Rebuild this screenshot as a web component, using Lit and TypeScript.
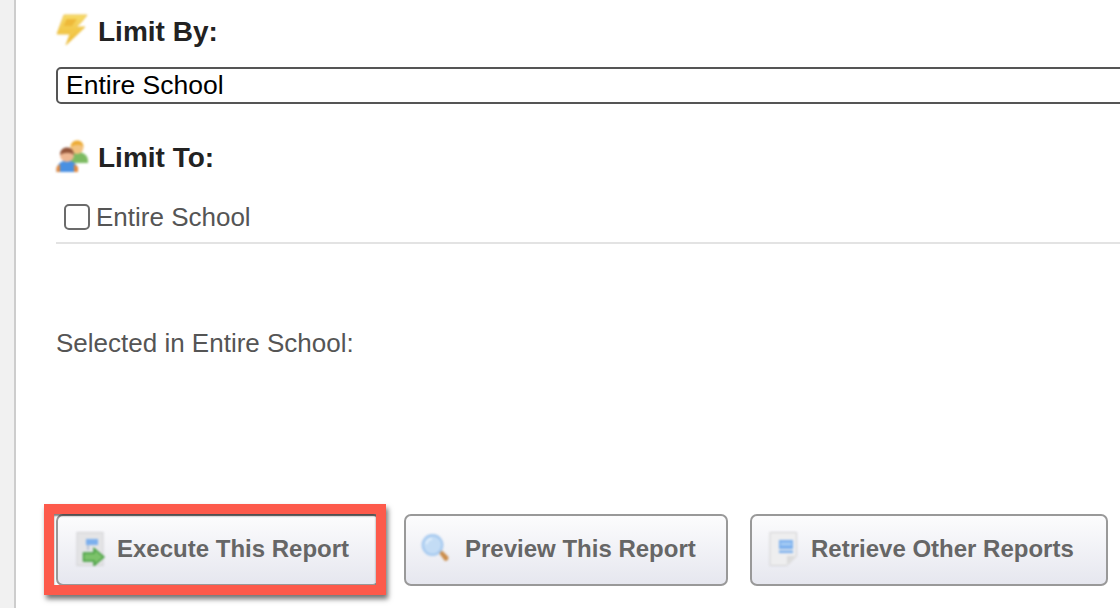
import { LitElement, html, css } from "lit";
import { customElement } from "lit/decorators.js";

const spine = html`<rect x="0.500" y="0.500" width="6.500" height="33" fill="#d67f4a"/>
  <path d="M1 3H6M1 6H6M1 9H6M1 12H6M1 15H6M1 18H6M1 21H6M1 24H6M1 27H6M1 30H6" stroke="#f1cdb0" stroke-width="1"/>`;

const bolt = html`<svg class="icon up" width="32" height="32" viewBox="0 0 32 32">
  <defs><linearGradient id="b" x1="0" y1="0" x2="0" y2="1"><stop offset="0" stop-color="#f7dc6a"/><stop offset="1" stop-color="#eeb62c"/></linearGradient></defs>
  <path d="M8 1H31L25 8.500 20 13H29L10 31 14 20H1Z" fill="url(#b)" stroke="#edc452" stroke-width="1"/>
  <path d="M10.500 5H21L16 12H7.500Z" fill="#eeb93a"/>
  <path d="M14 17H21L13 24Z" fill="#f3c94e"/>
</svg>`;

const people = html`<svg class="icon up" width="32" height="32" viewBox="0 0 32 32">
  <path d="M12 22C12 15 16 12 21 12C27 12 32 15 32 21V23H12Z" fill="#7dbb62"/>
  <circle cx="21" cy="7.500" r="6.500" fill="#f2c27f"/>
  <path d="M14.500 7C15 2 18 0.500 21.500 0.500C25 0.500 27.500 3 27.500 7C25 4 19 4 14.500 7Z" fill="#ecab35"/>
  <path d="M0.500 32C0.500 24 5 20.500 11 20.500C17 20.500 22 24 22 32Z" fill="#4a90e2"/>
  <path d="M0.500 32V27L4 24V32ZM18 32V24L22 27V32Z" fill="#e48a3e"/>
  <circle cx="11" cy="15" r="7" fill="#eeb793"/>
  <path d="M4 15C4 10 7 7.500 11 7.500C15 7.500 18 10 18 15C15 12 8 12 4 15Z" fill="#94553a"/>
</svg>`;

const execute = html`<svg class="icon" width="30" height="34" viewBox="0 0 30 34">
  <rect x="2" y="0.500" width="26" height="33" fill="#e4e4e6" stroke="#d2d2d4"/>
  ${spine}
  <rect x="11" y="7" width="12" height="6" fill="#7cb0ee"/>
  <path d="M13 13V18" stroke="#8fa8c8"/>
  <path d="M8.500 21H19V16.500L29 25 19 33.500V29H8.500Z" fill="#7cc26a" stroke="#3f9a3b" stroke-width="1.400"/>
</svg>`;

const search = html`<svg class="icon" width="30" height="30" viewBox="0 0 30 30">
  <path d="M18 19L21 16.500 27 22.500C28.500 25 26 28 23.500 26.500Z" fill="#cb8d4c"/>
  <circle cx="11.500" cy="11" r="9.800" fill="#c3dcf5" stroke="#a4c8ef" stroke-width="2.200"/>
  <path d="M5.500 10C6 7 8 5 11 5" fill="none" stroke="#e3f0fc" stroke-width="2"/>
</svg>`;

const retrieve = html`<svg class="icon" width="30" height="34" viewBox="0 0 30 34">
  <path d="M2 0.500H28.500V24L19 33.500H2Z" fill="#eeeeef" stroke="#d2d2d4"/>
  <path d="M19 33.500V24H28.500Z" fill="#dcdcdc"/>
  ${spine}
  <rect x="11" y="8" width="14" height="9" fill="#7cb0ee"/>
  <rect x="12.500" y="10.500" width="11" height="3" fill="#a8cdf5"/>
  <rect x="11" y="18.500" width="14" height="2.500" fill="#7cb0ee"/>
</svg>`;

@customElement("app-root")
export class AppRoot extends LitElement {
  static styles = css`
    :host {
      display: flex;
      width: 1120px;
      height: 608px;
      overflow: hidden;
      background: #fff;
      font-family: "Liberation Sans", Arial, sans-serif;
      color: #555;
    }
    .gutter {
      flex: none;
      width: 14px;
      background: #f1f1f1;
      border-right: 2px solid #cdcdcd;
    }
    .main {
      position: relative;
      flex: 1;
      min-width: 0;
      padding: 14px 0 0 40px;
      box-sizing: border-box;
    }
    .heading {
      display: flex;
      align-items: center;
      gap: 10px;
      height: 36px;
      margin: 0;
      font-size: 28px;
      font-weight: 700;
      color: #222;
    }
    .icon {
      flex: none;
      filter: blur(0.8px);
    }
    .up {
      margin-top: -5px;
    }
    .select {
      width: 1100px;
      height: 37px;
      margin: 17px 0 0;
      padding-left: 8px;
      box-sizing: border-box;
      display: flex;
      align-items: center;
      border: 2px solid #555;
      border-radius: 5px;
      font-size: 26.500px;
      color: #000;
    }
    .to { margin-top: 36px; }
    .check-row {
      display: flex;
      align-items: center;
      gap: 6px;
      height: 48px;
      margin-top: 20px;
      padding: 0 0 4px 8px;
      box-sizing: border-box;
      border-bottom: 2px solid #e3e3e3;
      font-size: 26px;
      color: #555;
    }
    .box {
      flex: none;
      width: 26px;
      height: 26px;
      box-sizing: border-box;
      border: 2px solid #6b6b6b;
      border-radius: 5px;
      background: #fff;
    }
    .selected {
      margin: 83px 0 0;
      font-size: 26px;
      line-height: 32px;
      color: #555;
    }
    .actions {
      display: flex;
      margin-top: 155px;
    }
    .btn {
      flex: none;
      display: flex;
      align-items: center;
      height: 72px;
      box-sizing: border-box;
      padding: 0 0 2px 17px;
      border: 2px solid #999;
      border-radius: 7px;
      background: linear-gradient(#fcfcfd, #e6e7ef);
      font: 700 24px "Liberation Sans", Arial, sans-serif;
      color: #666;
      white-space: nowrap;
    }
    .exec { width: 324px; gap: 12px; }
    .prev { width: 324px; margin-left: 24px; gap: 14px; padding-left: 15px; }
    .retr { width: 358px; margin-left: 22px; gap: 13px; padding-left: 16px; }
    .mark {
      position: absolute;
      left: 28px;
      top: 504px;
      width: 342px;
      height: 91px;
      box-sizing: border-box;
      border: 10px solid #fd5a4b;
      box-shadow: 2px 4px 5px rgba(0, 0, 0, 0.55), inset 0 2px 2px rgba(0, 0, 0, 0.5);
      pointer-events: none;
    }
  `;

  render() {
    return html`
      <div class="gutter"></div>
      <div class="main">
        <h2 class="heading">${bolt}<span>Limit By:</span></h2>
        <div class="select">Entire School</div>
        <h2 class="heading to">${people}<span>Limit To:</span></h2>
        <div class="check-row"><span class="box"></span><span>Entire School</span></div>
        <p class="selected">Selected in Entire School:</p>
        <div class="actions">
          <button class="btn exec">${execute}<span>Execute This Report</span></button>
          <button class="btn prev">${search}<span>Preview This Report</span></button>
          <button class="btn retr">${retrieve}<span>Retrieve Other Reports</span></button>
        </div>
        <div class="mark"></div>
      </div>
    `;
  }
}
